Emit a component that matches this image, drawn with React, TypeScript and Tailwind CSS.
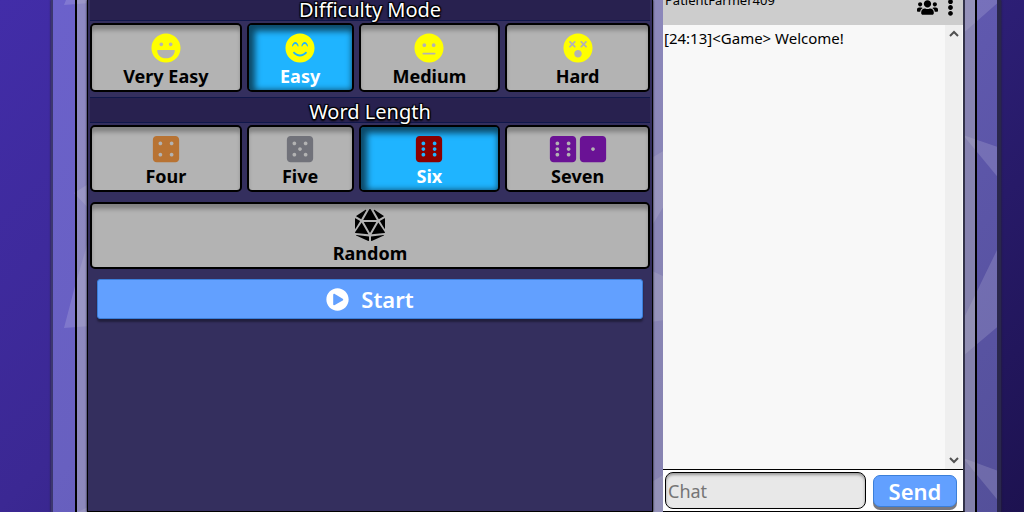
import { clsx } from "clsx";
import type { IconType } from "react-icons";
import {
  FaDiceD20,
  FaDiceFive,
  FaDiceFour,
  FaDiceOne,
  FaDiceSix,
  FaDizzy,
  FaEllipsisV,
  FaLaugh,
  FaMeh,
  FaPlayCircle,
  FaSmileBeam,
  FaUsers,
} from "react-icons/fa";
import { useState } from "react";

type Option = {
  label: string;
  icons: IconType[];
  tone: string;
};

const difficulties: Option[] = [
  { label: "Very Easy", icons: [FaLaugh], tone: "pt-2 pb-px text-[#ffff00]" },
  { label: "Easy", icons: [FaSmileBeam], tone: "pt-2 pb-px text-[#ffff00]" },
  { label: "Medium", icons: [FaMeh], tone: "pt-2 pb-px text-[#ffff00]" },
  { label: "Hard", icons: [FaDizzy], tone: "pt-2 pb-px text-[#ffff00]" },
];

const lengths: Option[] = [
  { label: "Four", icons: [FaDiceFour], tone: "pt-[7px] text-[#b87333]" },
  { label: "Five", icons: [FaDiceFive], tone: "pt-[7px] text-[#71727a]" },
  { label: "Six", icons: [FaDiceSix], tone: "pt-[7px] text-[#8b0000]" },
  { label: "Seven", icons: [FaDiceSix, FaDiceOne], tone: "pt-[7px] text-[#6a1295]" },
];

// Translucent shards scattered behind the panels.
const shards = [
  "66,0 90,0 90,3 64,5",
  "74,193 90,183 90,210",
  "64,328 75,286 87,245 90,245 90,326",
  "78,512 90,506 90,512",
  "650,159 665,150 665,204 650,229",
  "650,270 665,277 665,320 650,322",
  "650,483 665,474 665,512 650,512",
  "960,0 1001,0 960,36",
  "963,135 1001,148 1001,181",
  "997,250 1001,252 1001,324 976,345 963,356 963,320",
  "963,458 1001,472 1001,504",
];

function SectionTitle({ children }: { children: string }) {
  return (
    <h2 className="h-[26px] border-y border-[#10174a] bg-[#28214f] text-center text-[20px] leading-7 text-white [text-shadow:1px_1px_1px_#000,-1px_-1px_1px_#000,1px_-1px_1px_#000,-1px_1px_1px_#000,0_2px_2px_#000]">
      {children}
    </h2>
  );
}

function OptionButton({
  option,
  selected,
  onClick,
}: {
  option: Option;
  selected: boolean;
  onClick: () => void;
}) {
  return (
    <button
      type="button"
      aria-pressed={selected}
      onClick={onClick}
      className={clsx(
        "flex min-w-0 flex-col items-center rounded-[5px] border-2 border-black text-[18px] leading-6 font-bold",
        selected
          ? "bg-[#1fb4ff] text-white shadow-[inset_3px_3px_6px_3px_rgba(0,0,0,0.6)]"
          : "bg-[#b3b3b3] text-black shadow-[inset_0_6px_4px_-1px_rgba(0,0,0,0.28)]",
      )}
    >
      <span className={clsx("flex", option.tone)}>
        {option.icons.map((Icon, i) => (
          <Icon key={i} size={30} />
        ))}
      </span>
      {option.label}
    </button>
  );
}

function OptionRow({ options, initial, className }: { options: Option[]; initial: string; className: string }) {
  const [picked, setPicked] = useState(initial);

  return (
    <div className={clsx("grid grid-cols-[152fr_107fr_142fr_145fr] gap-[5px]", className)}>
      {options.map((option) => (
        <OptionButton
          key={option.label}
          option={option}
          selected={picked === option.label}
          onClick={() => setPicked(option.label)}
        />
      ))}
    </div>
  );
}

function GamePanel() {
  return (
    <section className="min-w-0 flex-1 border border-t-0 border-black bg-[#342f5e] px-[2px] shadow-[0_0_2px_#000]">
      <div className="-mt-[5px]">
        <SectionTitle>Difficulty Mode</SectionTitle>
      </div>
      <OptionRow options={difficulties} initial="Easy" className="mt-[2px] h-[69px]" />
      <div className="mt-[5px]">
        <SectionTitle>Word Length</SectionTitle>
      </div>
      <OptionRow options={lengths} initial="Six" className="mt-[2px] h-[67px]" />
      <button
        type="button"
        className="mt-[10px] flex h-[67px] w-full flex-col items-center rounded-[5px] border-2 border-black bg-[#b3b3b3] pt-[5px] text-[18px] leading-6 font-bold text-black shadow-[inset_0_6px_4px_-1px_rgba(0,0,0,0.28)]"
      >
        <FaDiceD20 size={32} className="shrink-0" />
        Random
      </button>
      <div className="px-[7px] pt-[10px]">
        <button
          type="button"
          className="flex h-10 w-full items-center justify-center gap-3 rounded-[3px] border border-[#3b7fd9] bg-[#62a0ff] text-[22px] font-semibold text-white shadow-[0_3px_2px_rgba(0,0,0,0.35)]"
        >
          <FaPlayCircle size={23} />
          Start
        </button>
      </div>
    </section>
  );
}

function Chevron({ d }: { d: string }) {
  return (
    <svg viewBox="0 0 10 7" className="h-[7px] w-[10px]" fill="none" stroke="#505050" strokeWidth="2">
      <path d={d} />
    </svg>
  );
}

function ChatPanel() {
  return (
    <aside className="flex w-[302px] shrink-0 flex-col border-r-2 border-b border-r-[#33334a] border-b-black bg-white">
      <header className="flex h-[25px] shrink-0 justify-between bg-[#cdcdcd] pr-1 pl-[2px] text-black">
        <span className="-mt-2 text-[13px] leading-4">PatientFarmer409</span>
        <span className="-mt-[3px] flex gap-1">
          <button type="button" aria-label="Players" className="h-5">
            <FaUsers size={21} />
          </button>
          <button type="button" aria-label="Menu" className="h-5">
            <FaEllipsisV size={17} />
          </button>
        </span>
      </header>
      <div className="flex min-h-0 flex-1 bg-[#f8f8f8]">
        <p className="flex-1 pt-px pl-px text-[15px] leading-6 text-black">[24:13]&lt;Game&gt; Welcome!</p>
        <div className="mr-px flex w-[17px] flex-col items-center justify-between bg-[#efefef] py-[5px]">
          <Chevron d="M1 6 5 2 9 6" />
          <Chevron d="M1 1 5 5 9 1" />
        </div>
      </div>
      <form
        className="flex h-[42px] shrink-0 items-center gap-[7px] border-t border-black pr-[6px] pl-[2px]"
        onSubmit={(e) => e.preventDefault()}
      >
        <input
          type="text"
          aria-label="Chat"
          placeholder="Chat"
          className="h-[37px] min-w-0 flex-1 rounded-[8px] border border-black bg-[#e8e8e8] px-[2px] text-[18px] text-black shadow-[inset_0_2px_3px_rgba(0,0,0,0.35)] placeholder:text-[#757575]"
        />
        <button
          type="submit"
          className="h-8 w-[84px] rounded-[7px] border border-[#3b7fd9] bg-[#62a0ff] text-[22px] leading-7 font-semibold text-white shadow-[0_3px_0_#77777f]"
        >
          Send
        </button>
      </form>
    </aside>
  );
}

export default function App() {
  return (
    <div className="flex h-screen overflow-hidden bg-[linear-gradient(135deg,#422da8_0%,#3b2893_33%,#2c1e74_67%,#1d1250_100%)] pr-[23px] pl-[51px] font-['Noto_Sans','Open_Sans',sans-serif]">
      <div className="relative flex min-w-0 flex-1 border-r-4 border-l-2 border-r-[#2a274c] border-l-[#3c3770] bg-[linear-gradient(135deg,#6b61cb,#6860c0_33%,#5f58ad_67%,#54509a)] pr-5 pl-[22px] shadow-[0_0_2px_#222]">
        <svg
          aria-hidden="true"
          viewBox="53 0 944 512"
          preserveAspectRatio="none"
          className="absolute inset-0 h-full w-full"
          fill="#ffffff"
          fillOpacity="0.15"
        >
          {shards.map((points) => (
            <polygon key={points} points={points} />
          ))}
        </svg>
        <main className="relative flex min-w-0 flex-1 gap-[10px] border-x-2 border-black bg-[#bababa]/45 px-[10px]">
          <GamePanel />
          <ChatPanel />
        </main>
      </div>
    </div>
  );
}
